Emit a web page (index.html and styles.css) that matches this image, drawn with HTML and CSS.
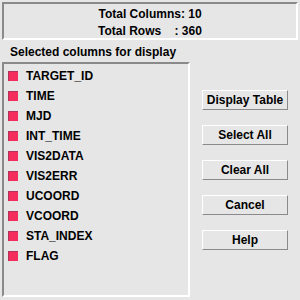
FILE: index.html
```html
<!DOCTYPE html>
<html>
<head>
<title>Select Columns</title>
<meta charset="UTF-8">
<link rel="stylesheet" href="styles.css">
</head>
<body>

<div class="summaryBox">
  <div>Total Columns: 10</div>
  <div>Total Rows &nbsp;&nbsp;&nbsp;: 360</div>
</div>

<div class="listLabel">Selected columns for display</div>

<div class="mainRow">
  <div class="colList">
    <div class="colItem"><span class="colMark"></span>TARGET_ID</div>
    <div class="colItem"><span class="colMark"></span>TIME</div>
    <div class="colItem"><span class="colMark"></span>MJD</div>
    <div class="colItem"><span class="colMark"></span>INT_TIME</div>
    <div class="colItem"><span class="colMark"></span>VIS2DATA</div>
    <div class="colItem"><span class="colMark"></span>VIS2ERR</div>
    <div class="colItem"><span class="colMark"></span>UCOORD</div>
    <div class="colItem"><span class="colMark"></span>VCOORD</div>
    <div class="colItem"><span class="colMark"></span>STA_INDEX</div>
    <div class="colItem"><span class="colMark"></span>FLAG</div>
  </div>
  <div class="btnColumn">
    <button class="dialogBtn">Display Table</button>
    <button class="dialogBtn">Select All</button>
    <button class="dialogBtn">Clear All</button>
    <button class="dialogBtn">Cancel</button>
    <button class="dialogBtn">Help</button>
  </div>
</div>

</body>
</html>
```

FILE: styles.css
```css
html, body {
  margin: 0;
  padding: 0;
  width: 300px;
  height: 300px;
  background-color: #e6e6e6;
  font-family: "Liberation Sans", Arial, sans-serif;
  font-weight: bold;
  font-size: 12px;
  color: #000;
  overflow: hidden;
}

.summaryBox {
  margin: 2px 2px 0 2px;
  height: 32px;
  padding-top: 2px;
  border: 2px solid;
  border-color: #8a8a8a #fff #fff #8a8a8a;
  text-align: center;
  line-height: 17px;
}

.listLabel {
  height: 20px;
  line-height: 20px;
  padding-top: 2px;
  padding-left: 10px;
}

.mainRow {
  display: flex;
  height: 235px;
}

.colList {
  width: 184px;
  margin-left: 2px;
  padding-top: 2px;
  border: 2px solid;
  border-color: #8a8a8a #fff #fff #8a8a8a;
}

.colItem {
  display: flex;
  align-items: center;
  height: 20px;
  padding-left: 4px;
}

.colMark {
  width: 9px;
  height: 9px;
  margin-right: 8px;
  background-color: #f52d5c;
  border-top: 1px solid #b0345a;
  border-left: 1px solid #b0345a;
}

.btnColumn {
  flex: 1;
  display: flex;
  flex-direction: column;
  align-items: center;
  gap: 15px;
  padding-top: 28px;
}

.dialogBtn {
  width: 86px;
  height: 20px;
  padding: 0;
  margin: 0;
  font-family: "Liberation Sans", Arial, sans-serif;
  font-weight: bold;
  font-size: 12px;
  color: #000;
  background-color: #e6e6e6;
  border: 1px solid;
  border-color: #fff #8a8a8a #8a8a8a #fff;
}
```
